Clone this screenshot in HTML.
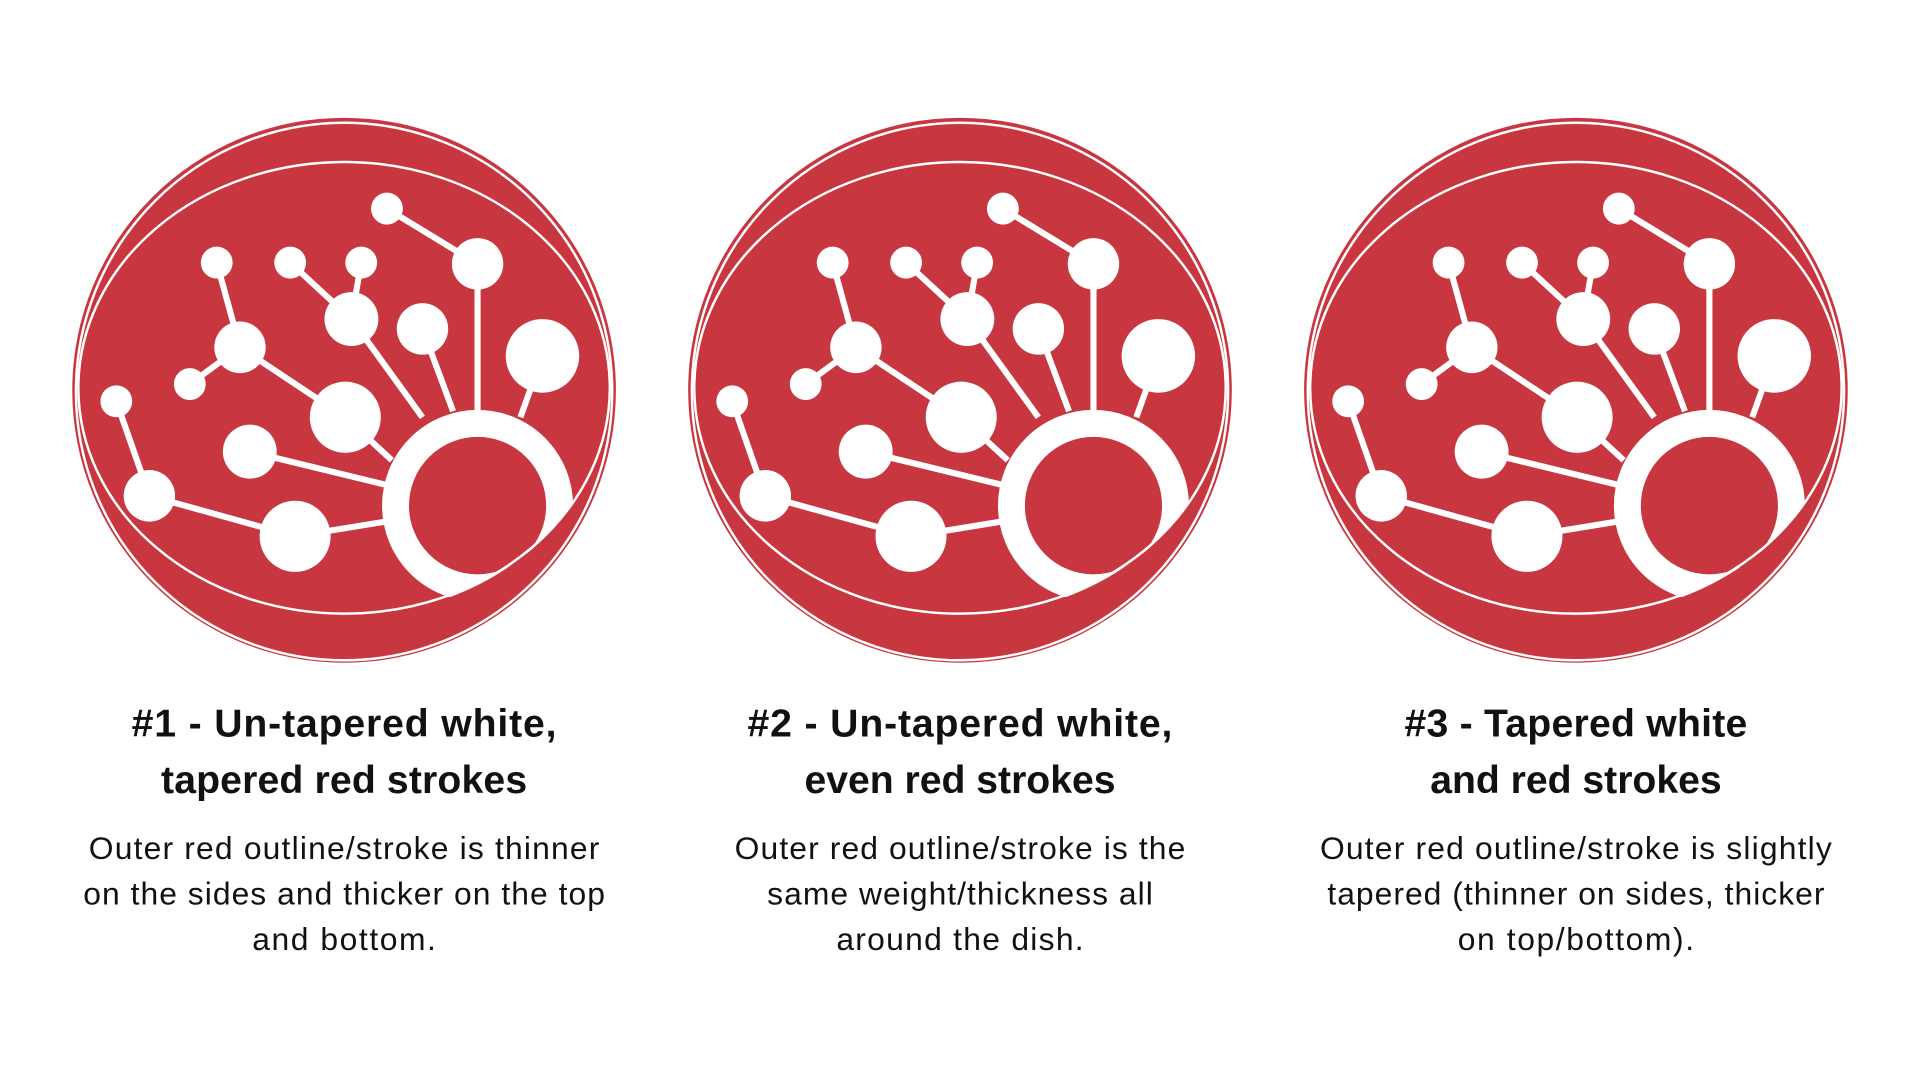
<!DOCTYPE html>
<html><head><meta charset="utf-8"><style>
html,body{margin:0;padding:0;background:#fff;width:1920px;height:1080px;overflow:hidden}
svg{display:block}
.t{font-family:"Liberation Sans",sans-serif;font-weight:bold;font-size:32px;fill:#111;text-anchor:middle}
.b{font-family:"Liberation Sans",sans-serif;font-size:26px;fill:#111;text-anchor:middle}
</style></head><body>
<svg width="1920" height="1080" viewBox="0 0 1568 880" preserveAspectRatio="none">
<defs>
<clipPath id="cp"><ellipse cx="0" cy="-2" rx="217" ry="186"/></clipPath>
<g id="logo">
<circle cx="0" cy="0" r="222" fill="#C8363F"/>
<ellipse cx="0" cy="1" rx="219" ry="219" fill="none" stroke="#fff" stroke-width="2"/>
<ellipse cx="0" cy="-2" rx="217" ry="184" fill="none" stroke="#fff" stroke-width="2"/>
<g stroke="#fff" stroke-width="5" fill="none">
<line x1="35" y1="-148" x2="109" y2="-103"/>
<line x1="109" y1="-103" x2="109" y2="17"/>
<line x1="162" y1="-28" x2="144" y2="22"/>
<line x1="64" y1="-50" x2="89" y2="17"/>
<line x1="6" y1="-58" x2="64" y2="22"/>
<line x1="14" y1="-104" x2="6" y2="-58"/>
<line x1="-44" y1="-104" x2="6" y2="-58"/>
<line x1="-104" y1="-104" x2="-85" y2="-35"/>
<line x1="-85" y1="-35" x2="-126" y2="-5"/>
<line x1="-85" y1="-35" x2="1" y2="22"/>
<line x1="1" y1="22" x2="39" y2="57"/>
<line x1="-77" y1="50" x2="34" y2="77"/>
<line x1="-186" y1="9" x2="-159" y2="86"/>
<line x1="-159" y1="86" x2="-40" y2="119"/>
<line x1="-40" y1="119" x2="34" y2="107"/>
</g>
<g clip-path="url(#cp)"><circle cx="109" cy="94" r="67" fill="none" stroke="#fff" stroke-width="22"/></g>
<g fill="#fff">
<circle cx="35" cy="-148" r="13"/>
<circle cx="109" cy="-103" r="21"/>
<circle cx="-104" cy="-104" r="13"/>
<circle cx="-44" cy="-104" r="13"/>
<circle cx="14" cy="-104" r="13"/>
<circle cx="6" cy="-58" r="22"/>
<circle cx="64" cy="-50" r="21"/>
<circle cx="162" cy="-28" r="30"/>
<circle cx="-85" cy="-35" r="21"/>
<circle cx="-126" cy="-5" r="13"/>
<circle cx="1" cy="22" r="29"/>
<circle cx="-186" cy="9" r="13"/>
<circle cx="-77" cy="50" r="22"/>
<circle cx="-159" cy="86" r="21"/>
<circle cx="-40" cy="119" r="29"/>
</g>
</g>
</defs>
<use href="#logo" transform="translate(281,318)"/>
<use href="#logo" transform="translate(784,318)"/>
<use href="#logo" transform="translate(1287,318)"/>

<text class="t" x="281" y="600" textLength="347">#1 - Un-tapered white,</text>
<text class="t" x="281" y="646" textLength="299">tapered red strokes</text>
<text class="b" x="281" y="700" textLength="417">Outer red outline/stroke is thinner</text>
<text class="b" x="281" y="737" textLength="426">on the sides and thicker on the top</text>
<text class="b" x="281" y="774" textLength="150">and bottom.</text>

<text class="t" x="784" y="600" textLength="347">#2 - Un-tapered white,</text>
<text class="t" x="784" y="646" textLength="254">even red strokes</text>
<text class="b" x="784" y="700" textLength="368">Outer red outline/stroke is the</text>
<text class="b" x="784" y="737" textLength="315">same weight/thickness all</text>
<text class="b" x="784" y="774" textLength="202">around the dish.</text>

<text class="t" x="1287" y="600" textLength="280">#3 - Tapered white</text>
<text class="t" x="1287" y="646" textLength="238">and red strokes</text>
<text class="b" x="1287" y="700" textLength="418">Outer red outline/stroke is slightly</text>
<text class="b" x="1287" y="737" textLength="406">tapered (thinner on sides, thicker</text>
<text class="b" x="1287" y="774" textLength="193">on top/bottom).</text>
</svg>
</body></html>
